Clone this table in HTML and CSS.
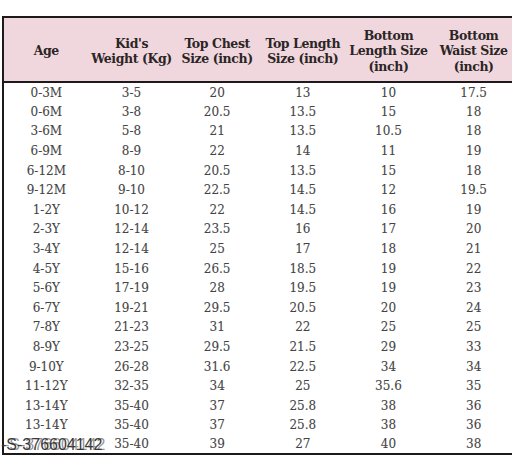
FILE: index.html
```html
<html>
  <head>
    <meta charset="UTF-8" />
    <title>Size Chart</title>
    <link rel="stylesheet" href="styles.css">
  </head>
  <body>
    <div class="sheet">
      <table class="chart">
        <colgroup>
          <col><col><col><col><col><col>
        </colgroup>
        <thead>
          <tr>
            <th>Age</th>
            <th>Kid's<br>Weight (Kg)</th>
            <th>Top Chest<br>Size (inch)</th>
            <th>Top Length<br>Size (inch)</th>
            <th>Bottom<br>Length Size<br>(inch)</th>
            <th>Bottom<br>Waist Size<br>(inch)</th>
          </tr>
        </thead>
        <tbody>
          <tr><td>0-3M</td><td>3-5</td><td>20</td><td>13</td><td>10</td><td>17.5</td></tr>
          <tr><td>0-6M</td><td>3-8</td><td>20.5</td><td>13.5</td><td>15</td><td>18</td></tr>
          <tr><td>3-6M</td><td>5-8</td><td>21</td><td>13.5</td><td>10.5</td><td>18</td></tr>
          <tr><td>6-9M</td><td>8-9</td><td>22</td><td>14</td><td>11</td><td>19</td></tr>
          <tr><td>6-12M</td><td>8-10</td><td>20.5</td><td>13.5</td><td>15</td><td>18</td></tr>
          <tr><td>9-12M</td><td>9-10</td><td>22.5</td><td>14.5</td><td>12</td><td>19.5</td></tr>
          <tr><td>1-2Y</td><td>10-12</td><td>22</td><td>14.5</td><td>16</td><td>19</td></tr>
          <tr><td>2-3Y</td><td>12-14</td><td>23.5</td><td>16</td><td>17</td><td>20</td></tr>
          <tr><td>3-4Y</td><td>12-14</td><td>25</td><td>17</td><td>18</td><td>21</td></tr>
          <tr><td>4-5Y</td><td>15-16</td><td>26.5</td><td>18.5</td><td>19</td><td>22</td></tr>
          <tr><td>5-6Y</td><td>17-19</td><td>28</td><td>19.5</td><td>19</td><td>23</td></tr>
          <tr><td>6-7Y</td><td>19-21</td><td>29.5</td><td>20.5</td><td>20</td><td>24</td></tr>
          <tr><td>7-8Y</td><td>21-23</td><td>31</td><td>22</td><td>25</td><td>25</td></tr>
          <tr><td>8-9Y</td><td>23-25</td><td>29.5</td><td>21.5</td><td>29</td><td>33</td></tr>
          <tr><td>9-10Y</td><td>26-28</td><td>31.6</td><td>22.5</td><td>34</td><td>34</td></tr>
          <tr><td>11-12Y</td><td>32-35</td><td>34</td><td>25</td><td>35.6</td><td>35</td></tr>
          <tr><td>13-14Y</td><td>35-40</td><td>37</td><td>25.8</td><td>38</td><td>36</td></tr>
          <tr><td>13-14Y</td><td>35-40</td><td>37</td><td>25.8</td><td>38</td><td>36</td></tr>
          <tr><td></td><td>35-40</td><td>39</td><td>27</td><td>40</td><td>38</td></tr>
        </tbody>
      </table>
      <div class="stamp">-S-376604142</div>
    </div>
  </body>
</html>
```

FILE: styles.css
```css
body {
  margin: 0;
  background-color: #fff;
  overflow: hidden;
}

.sheet {
  position: relative;
  padding-top: 16px;
  padding-left: 2px;
}

.chart {
  width: 516px;
  table-layout: fixed;
  border-collapse: collapse;
  border: 2px solid #1e1a1b;
  font-family: "DejaVu Serif", serif;
}

.chart col {
  width: 85px;
}

.chart th {
  height: 65px;
  padding: 3px 0 0;
  background-color: #f0d7dd;
  border-bottom: 2px solid #1e1a1b;
  color: #2b2526;
  font-size: 12.5px;
  font-weight: bold;
  line-height: 15.5px;
  letter-spacing: -0.4px;
  text-align: center;
}

.chart td {
  height: 19.6px;
  padding: 1px 0 0;
  color: #444;
  font-size: 12px;
  text-align: center;
  -webkit-text-stroke: 0.1px #444;
}

.stamp {
  position: absolute;
  left: 1px;
  top: 436px;
  font-family: "Liberation Sans", sans-serif;
  font-size: 16px;
  color: #3a3a3a;
  text-shadow: 3px 0 0 rgba(60, 60, 60, 0.55);
}
```
